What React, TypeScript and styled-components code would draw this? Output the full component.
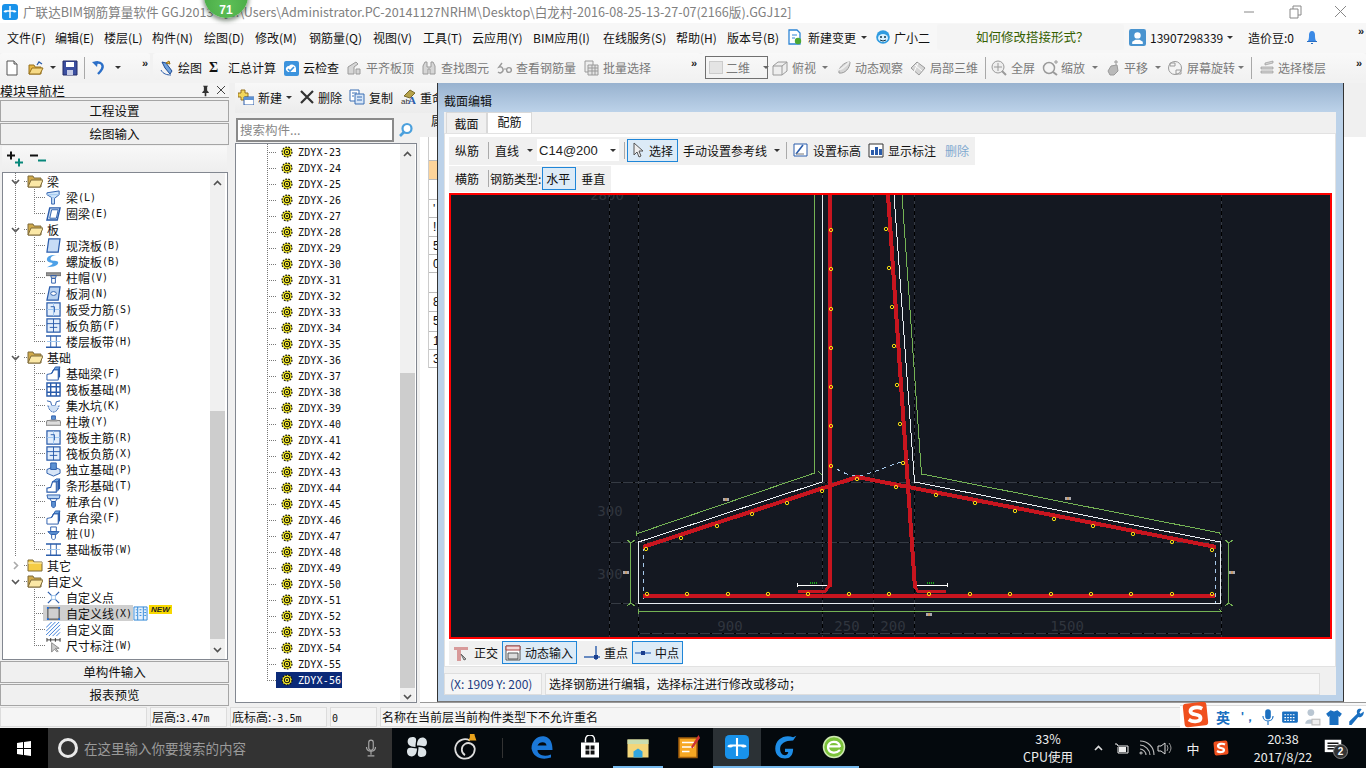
import React from "react";
import styled, { createGlobalStyle } from "styled-components";

const Global = createGlobalStyle`
  html, body { margin: 0; padding: 0; background: #f0f0f0; overflow: hidden; }
  body { font-family: "Noto Sans CJK SC", "Liberation Sans", sans-serif; font-size: 12px; color: #111; }
  * { box-sizing: border-box; }
`;

const B = "#2a5cab", L = "#9cc4ee", G = "#9a9a9a", GL = "#d6d6d6";

const icons: Record<string, React.ReactNode> = {
  newdoc: <><path d="M3 1h7l3 3v11H3z" fill="#fff" stroke="#555" /><path d="M10 1v3h3" fill="#ddd" stroke="#555" /></>,
  open: <><path d="M1 5h5l1 2h6v7H1z" fill="#e8b948" stroke="#96701c" /><path d="M1 14l3-6h11l-3 6z" fill="#f6da86" stroke="#96701c" /><path d="M9 5l2-3 3 2" fill="none" stroke="#2a5cab" strokeWidth="1.3" /></>,
  save: <><path d="M1 1h14v14H1z" fill="#3b4fa0" stroke="#222a66" /><path d="M4 2h8v5H4z" fill="#fff" /><path d="M5 10h6v5H5z" fill="#c6cce6" /></>,
  undo: <><path d="M4 3c6-2 9 2 7 6-1 2-3 4-4 5" fill="none" stroke="#2b6fc8" strokeWidth="2.4" /><path d="M1 2l6-1-1 6z" fill="#2b6fc8" /></>,
  draw: <><path d="M3 2l4 1 6 8-2 3-5-6z" fill="#6ea1dc" stroke="#1f4b94" /><path d="M7 3l3-2 1 3z" fill="#e8c24a" stroke="#96701c" /><path d="M2 10c2 4 6 5 10 5" fill="none" stroke="#2a5cab" /></>,
  cloud: <><rect x="1" y="1" width="15" height="15" rx="2" fill="#3c93dd" /><path d="M3 10a3 3 0 0 1 3-4 4 4 0 0 1 7 2v4H5z" fill="#fff" /><path d="M5 9l2 2 4-4" fill="none" stroke="#3c93dd" strokeWidth="1.6" /></>,
  align: <><path d="M2 14V7l8-5 2 2-4 3v7z" fill={GL} stroke={G} /><path d="M10 9h4v5h-4z" fill={GL} stroke={G} /></>,
  binoc: <><path d="M2 6l2-4h2v5h4V2h2l2 4v8H9V9H7v5H2z" fill={GL} stroke={G} /></>,
  eye60: <><path d="M2 12a3 3 0 1 0 1-5l3-4" fill="none" stroke={G} strokeWidth="1.4" /><path d="M8 9h2" stroke={G} /><circle cx="13" cy="10" r="2.4" fill="none" stroke={G} strokeWidth="1.4" /></>,
  batch: <><path d="M2 1h8v11H2z" fill="#eee" stroke={G} /><path d="M5 5h10v10H5z" fill="#e4e4e4" stroke={G} /><path d="M5 8h10M5 11h10M9 5v10M12 5v10" stroke={G} /></>,
  cube: <><path d="M1 6l5-4h9v9l-5 4H1z" fill="#eee" stroke={G} /><path d="M1 6h9v9M10 6l5-4" fill="none" stroke={G} /></>,
  orbit: <><path d="M3 13C2 8 8 2 14 2c0 6-5 12-11 11z" fill={GL} stroke={G} /><path d="M1 10c4 0 8-3 12-8" fill="none" stroke="#eee" strokeWidth="2" /></>,
  local3d: <><path d="M1 8l6-6 8 6-6 7z" fill={GL} stroke={G} /><path d="M5 5l7 6M8 3l-4 9" stroke="#fff" /></>,
  full: <><circle cx="7" cy="7" r="6" fill="#eee" stroke={G} /><path d="M7 3v8M3 7h8" stroke={G} /><path d="M11 11l4 4" stroke={G} strokeWidth="2" /></>,
  zoom: <><circle cx="7" cy="8" r="5.5" fill="#f4f4f4" stroke={G} strokeWidth="1.5" /><path d="M11 12l4 3" stroke={G} strokeWidth="2" /><path d="M12 2h4M14 0v4" stroke={G} /></>,
  pan: <><path d="M3 11l3-5 6-1 1 6-4 4H5z" fill="#b9b9b9" stroke={G} /><path d="M11 0v5M9 2h4" stroke={G} /></>,
  rotate: <><circle cx="8" cy="8" r="6.5" fill="#f4f4f4" stroke={G} /><path d="M3 3h5v3H3zM9 10h5v4H9z" fill="none" stroke={G} /></>,
  floors: <><path d="M6 3l8-2v2l-8 2zM2 7h12v2H2zM2 11h12v2H2z" fill={GL} stroke={G} strokeWidth=".7" /></>,
  doc: <><path d="M2 1h8l3 3v11H2z" fill="#fff" stroke="#2e86d6" strokeWidth="1.3" /><path d="M5 6h5M5 9h3" stroke="#2e86d6" /><circle cx="11" cy="12" r="3.2" fill="#4da833" /></>,
  robot: <><circle cx="8" cy="8" r="6.8" fill="#2f9be0" /><ellipse cx="8" cy="9" rx="5" ry="4" fill="#d7f0ff" /><circle cx="6" cy="8" r="1" fill="#134" /><circle cx="10" cy="8" r="1" fill="#134" /><path d="M5 11q3 2 6 0" fill="none" stroke="#134" /></>,
  user: <><rect x="0" y="0" width="16" height="16" rx="2" fill="#4a94cf" /><circle cx="8" cy="6" r="3" fill="#fff" /><path d="M3 14v-2l3-2h4l3 2v2z" fill="#fff" /></>,
  bell: <><path d="M4 12c1-2 1-4 1-6s1-4 3-4 3 2 3 4 0 4 1 6z" fill="#3b8ae6" /><path d="M3 12h10v1H3zM7 14h2v1H7z" fill="#2a6fc4" /></>,
  newItem: <><path d="M3 1h4v3h3v4H7v3H3V8H0V4h3z" fill="#f2d65a" stroke="#96701c" /><path d="M6 8h10v8H6z" fill="#fff" stroke="#2a5cab" /><path d="M6 8h10v3H6z" fill="#5d91d2" /></>,
  del: <path d="M2 2l12 12M14 2L2 14" stroke="#333" strokeWidth="2.2" />,
  copy: <><path d="M1 1h9v11H1z" fill="#fff" stroke="#3b6fb4" /><path d="M6 5h9v10H6z" fill="#d6e5f7" stroke="#3b6fb4" /><path d="M3 4h5M3 7h2M8 8h5M8 11h5" stroke="#3b6fb4" /></>,
  rename: <><path d="M4 7l6-6 5 3-5 5z" fill="#b6a24a" stroke="#776a2a" /><text x="1" y="15" fontSize="8" fontFamily="Liberation Sans" fill="#333">ab</text><text x="8" y="15" fontSize="11" fontWeight="700" fontFamily="Liberation Serif" fill="#2a5cab">A</text></>,
  search: <><circle cx="9" cy="6.5" r="4.5" fill="#fff" stroke="#4ba0dd" strokeWidth="2.2" /><path d="M6 10l-4 4" stroke="#4ba0dd" strokeWidth="2.6" /></>,
  cursor: <path d="M4 1v12l3-3 2 5 2-1-2-5h4z" fill="#eee" stroke="#555" />,
  elev: <><path d="M2 2h13v12H2z" fill="#fff" stroke="#2a5cab" /><path d="M4 12l7-9" stroke="#2a5cab" strokeWidth="1.6" /><path d="M4 12h8" stroke="#777" /></>,
  show: <><path d="M1 2h14v13H1z" fill="#fff" stroke="#333" /><path d="M3 13V8h3v5zM7 13V5h3v8zM11 13V7h3v6z" fill="#2a5cab" /></>,
  ortho: <><path d="M1 2h14v3H8v11H4V5H1z" fill="#d89a9a" /><path d="M8 9l5 5-2 1z" fill="#bbb" stroke="#666" /></>,
  dyn: <><path d="M1 1h14v14H1z" fill="#fff" stroke="#555" /><path d="M1 1h14v4H1z" fill="#f3d9d9" stroke="#a44" /><path d="M3 8h10v6H3z" fill="#ddd" stroke="#555" /></>,
  perp: <><path d="M0 12h16" stroke="#2a5cab" strokeWidth="1.4" /><path d="M12 1v14" stroke="#2a5cab" strokeWidth="1.4" /><rect x="10" y="10" width="4" height="4" fill="#1b3f8f" /></>,
  mid: <><path d="M0 8h16" stroke="#4a7cc4" strokeWidth="1.4" /><rect x="6" y="6" width="4" height="4" fill="#1b3f8f" /></>,
  folderOpen: <><path d="M1 3h5l1 2h7v9H1z" fill="#cfa94a" stroke="#7e6a3a" /><path d="M1 14l3-7h12l-3 7z" fill="#fbe8a6" stroke="#7e6a3a" /></>,
  folderClosed: <><path d="M1 3h5l1 2h8v9H1z" fill="#f5cc45" stroke="#7e6a3a" /><path d="M1 6h14" stroke="#fff4c2" /></>,
  beam: <><path d="M1 3l13-2v4L9 9v6H6V8L1 5z" fill="#cfe5fa" stroke={B} /><path d="M1 5h13M6 8h3" stroke={L} /></>,
  ring: <><path d="M4 2h11l-3 13H1z" fill="#cfe0f5" stroke={B} strokeWidth="1.5" /><path d="M6 4h7l-2 9H4z" fill="#fff" stroke={B} /></>,
  slab: <path d="M3 1h12l-2 14H1z" fill="#c7dcf6" stroke={B} strokeWidth="1.3" />,
  spiral: <path d="M15 2C9 0 4 3 5 6c1 2 8 0 8 3s-5 5-12 5c4-2 6-3 6-4S0 9 1 5s7-5 14-3z" fill="#4ea1e8" />,
  cap: <><path d="M0 3h16v3H0z" fill="#999" stroke="#666" /><path d="M5 6h6l-1 3H6z" fill="#ccc" stroke={B} /><path d="M6 9h4v5H6z" fill="#fff" stroke={B} /></>,
  hole: <><path d="M4 1h11l-2 14H1z" fill="#b9d2f1" stroke={B} strokeWidth="1.3" /><ellipse cx="8" cy="8" rx="3" ry="2" fill="#fff" stroke={B} /></>,
  rebar: <><path d="M1 1h14v14H1z" fill="#e3eefb" stroke={B} strokeWidth="1.3" /><path d="M1 8h14M8 1v14" stroke={L} /><path d="M5 5h4v6" fill="none" stroke={B} /></>,
  neg: <><path d="M1 1h14v14H1z" fill="#e3eefb" stroke={B} strokeWidth="1.3" /><path d="M1 6h14M8 1v14" stroke={B} /><path d="M4 10h8" stroke={B} /></>,
  band: <><path d="M0 2h16M0 14h16" stroke={B} strokeWidth="1.6" /><path d="M5 2v12M11 2v12" stroke={B} /><path d="M1 8h14" stroke={L} /></>,
  fbeam: <><path d="M1 15V9l5-1 2-4h5v11z" fill="#fff" stroke={B} /><path d="M6 8l4-7h5l-2 3H8z" fill="#6ea5e0" stroke={B} /><path d="M13 4l2-3v10l-2 4z" fill="#2a5cab" /></>,
  raft: <><path d="M1 1h14v14H1z" fill="#fff" stroke={B} strokeWidth="1.5" /><path d="M5 1v14M11 1v14M1 5h14M1 11h14" stroke={B} strokeWidth="1.5" /></>,
  pit: <><path d="M1 3l4 1 1 4h4l1-4 4-1" fill="none" stroke={B} /><path d="M2 8c1 4 3 7 6 7s5-3 6-7" fill="#cfe0f5" stroke={B} strokeDasharray="2 1" /></>,
  pier: <><path d="M6 2h4v4H6z" fill="#5d91d2" stroke={B} /><path d="M1 7h14l1 5H0z" fill="#ddd" stroke="#777" /><path d="M4 6h8v2H4z" fill="#999" /></>,
  iso: <><path d="M1 8l7-3 7 3v4l-7 3-7-3z" fill="#d7e5f7" stroke={B} /><path d="M5 1h6v7H5z" fill="#5d91d2" stroke={B} /></>,
  strip: <><path d="M1 15v-4l4-1 2-6h4v11z" fill="#fff" stroke={B} strokeWidth="1.2" /><path d="M7 4l4-3h4l-3 3z" fill="#6ea5e0" stroke={B} /><path d="M12 4l3-3v10l-3 4z" fill="#2a5cab" /></>,
  pilecap: <><path d="M1 1h14l-1 4H2z" fill="#bcd6f4" stroke={B} /><path d="M4 5h8l-2 3H6z" fill="#fff" stroke={B} /><path d="M6 8h4v5l-2 2-2-2z" fill="#5d91d2" stroke={B} /></>,
  pile: <><path d="M5 1h6v5H5z" fill="#fff" stroke={B} /><path d="M2 6h12l-3 3H5z" fill="#5d91d2" stroke={B} /><path d="M6 9h4v4l-2 2-2-2z" fill="#fff" stroke={B} /></>,
  pt: <><path d="M2 2l12 12M14 2L2 14" stroke={B} strokeWidth="1.3" /><rect x="6" y="6" width="4" height="4" fill="#fff" stroke={L} /></>,
  line: <><path d="M2 2h12v12H2z" fill="none" stroke="#333" /><path d="M1 1h2v2H1zM13 1h2v2h-2zM1 13h2v2H1zM13 13h2v2h-2z" fill="#1f6fe0" /></>,
  area: <path d="M0 6l6-6M0 10L10 0M0 14L14 0M3 15L15 3M7 15l8-8M11 15l4-4" stroke="#3478d6" />,
  dim: <><path d="M1 2h14M1 0v4M15 0v4M5 0v4M10 0v4" stroke="#333" /><path d="M6 5v10l3-3 3 3 1-1-3-3h4z" fill="#ccc" stroke="#888" /></>,
  tab3: <><path d="M1 1h14v14H1z" fill="#e6f1fd" stroke="#2e86d6" /><path d="M5 1v14M11 1v14M3 4h1M3 7h1M3 10h1M7 4h2M7 7h2M7 10h2M12 4h2M12 7h2M12 10h2" stroke="#2e86d6" /></>,
  appBlue: <><rect x="0" y="0" width="16" height="16" rx="3" fill="#1992ea" /><path d="M8 2v12M3 7h10M5 7a2 2 0 0 1-3 0M11 7a2 2 0 0 0 3 0" stroke="#fff" strokeWidth="1.4" fill="none" /></>,
  pin: <path d="M5 2h6v1H10v5l2 2v1H9v4H7v-4H4v-1l2-2V3H5z" fill="#333" />,
  gear: <><circle cx="8" cy="8" r="6.6" fill="#f8ee2a" stroke="#111" strokeWidth="1.6" strokeDasharray="2.4 1.6" /><circle cx="8" cy="8" r="3.6" fill="#f8ee2a" stroke="#111" strokeWidth="1.4" /><circle cx="8" cy="8" r="1.3" fill="#111" /></>,
  winlogo: <path d="M1 3l6-1v6H1zM8 2l7-1v7H8zM1 9h6v6l-6-1zM8 9h7v7l-7-1z" fill="#fff" />,
  mic: <><rect x="6" y="1" width="4" height="9" rx="2" fill="none" stroke="#aaa" /><path d="M4 7c0 5 8 5 8 0M8 11v3M5 15h6" stroke="#aaa" fill="none" /></>,
  pinwheel: <path d="M7 8C3 8 1 6 2 3c1-2 4-2 5-1s0 3 0 6zM8 7c0-4 2-6 5-5 2 1 2 4 1 5s-3 0-6 0zM9 8c4 0 6 2 5 5-1 2-4 2-5 1s0-3 0-6zM8 9c0 4-2 6-5 5-2-1-2-4-1-5s3 0 6 0z" fill="#dde4e8" />,
  spiralWin: <><path d="M11 4a6 6 0 1 0 3 5 4 4 0 1 0-6 4" fill="none" stroke="#ddd" strokeWidth="1.1" /><path d="M9 1c1-1 3-1 3 1l1 3H8l1-2z" fill="#e9a21b" transform="translate(2 -1)" /></>,
  edge: <path d="M15 10H5c0 3 4 5 9 3v2c-6 2-12 0-13-6C1 3 6 0 10 1c4 1 5 5 5 9zM5 7h6c0-3-5-3-6 0z" fill="#1b78d8" />,
  store: <><path d="M2 5h12v10H2z" fill="#fff" /><path d="M5 5V3a3 3 0 0 1 6 0v2" fill="none" stroke="#fff" /><path d="M5 7h2.6v2.6H5zM8.4 7H11v2.6H8.4zM5 10.4h2.6V13H5zM8.4 10.4H11V13H8.4z" fill="#111" /></>,
  explorer: <><path d="M1 3h14v12H1z" fill="#f3d67a" /><path d="M1 3h14v3H1z" fill="#c9ddb0" /><path d="M5 15v-4l3-2 3 2v4z" fill="#32a6e0" /></>,
  note: <><path d="M2 2h12v13H2z" fill="#f7a823" stroke="#a45f0c" /><path d="M4 5h8M4 8h8M4 11h5" stroke="#fff" /><path d="M15 0l-5 8 1 1 5-7z" fill="#c33" /></>,
  g: <path d="M13 2C8 0 2 3 2 9c0 4 3 6 6 6s5-2 5-6H8v2h2c0 1-1 2-2 2-2 0-3-2-3-4 0-3 3-5 8-5l2-3z" fill="#1e8de6" />,
  ie: <><circle cx="8" cy="8" r="7" fill="#7cc33a" stroke="#cfe9b2" /><path d="M4 7.5h8M4 8c0 4 5 5 8 2M4 8c0-4 7-5 8 0" fill="none" stroke="#fff" strokeWidth="1.5" /></>,
  wifi: <path d="M2 14a1 1 0 1 1 .1 0M1 9c3 0 6 3 6 6M1 5c5 0 10 5 10 10M1 1c8 0 14 6 14 14" fill="none" stroke="#bbb" strokeWidth="1.1" />,
  batt: <><path d="M1 4h2l1 2h10v7H4V7" fill="none" stroke="#eee" /><path d="M5 7h7v5H5z" fill="#eee" /></>,
  vol: <><path d="M1 6h3l4-3v11l-4-3H1z" fill="none" stroke="#ddd" /><path d="M10 5q2 3 0 6M12 3q4 5 0 10" fill="none" stroke="#999" /></>,
  sogou: <><rect x="1" y="1" width="14" height="14" rx="2" fill="#f0501e" transform="rotate(-6 8 8)" /><path d="M12 4.5C9 3 5 4 5 6c0 3 6 1 6 4 0 2-4 3-7 1" fill="none" stroke="#fff" strokeWidth="2.2" /></>,
  imic: <><rect x="5.5" y="1" width="5" height="9" rx="2.5" fill="#1a6fc0" /><path d="M3.5 7c0 6 9 6 9 0M8 12v3" stroke="#1a6fc0" fill="none" /></>,
  kbd: <><rect x="1" y="3" width="14" height="10" rx="1" fill="#1a6fc0" /><path d="M3 6h10M3 8.5h10M3 11h10" stroke="#fff" strokeDasharray="1.5 1" /></>,
  person: <><circle cx="7" cy="4" r="3" fill="#b9c6d2" /><path d="M2 14c0-5 9-5 9 0z" fill="#b9c6d2" /><rect x="8" y="10" width="7" height="5" fill="#eee" stroke="#bbb" /></>,
  shirt: <path d="M5 2l3 1 3-1 4 3-2 3-1-1v8H4V7L3 8 1 5z" fill="#1a6fc0" />,
  wrench: <path d="M15 3l-3 2-1-1 2-3c-3-1-5 1-4 4L2 12v3h2l6-7c3 1 5-2 5-5z" fill="#1a6fc0" />,
  msg: <><path d="M2 2h12v9H2z" fill="#fff" /><path d="M4 4.5h8M4 6.5h8M4 8.5h8" stroke="#111" /></>,
};

const Svg = styled.svg<{ $s: number }>`
  width: ${p => p.$s}px;
  height: ${p => p.$s}px;
  flex: none;
  display: block;
`;
const Ic = ({ n, s = 16 }: { n: string; s?: number }) => (
  <Svg viewBox="0 0 16 16" $s={s}>{icons[n]}</Svg>
);

const Page = styled.div`
  width: 1366px;
  height: 768px;
  display: flex;
  flex-direction: column;
  overflow: hidden;
  position: relative;
`;
const Gap = styled.i<{ $w: number }>`
  width: ${p => p.$w}px;
  flex: none;
  display: block;
`;

/* title bar */
const TitleBar = styled.div`
  height: 23px;
  background: #fff;
  display: flex;
  align-items: center;
  padding-left: 2px;
  gap: 5px;
  color: #808080;
  font-size: 12.6px;
  white-space: nowrap;
`;
const TitleText = styled.span`
  flex: 1;
  overflow: hidden;
`;
const WinBtns = styled.div`
  display: flex;
  gap: 30px;
  padding-right: 17px;
`;
const Badge = styled.div`
  position: absolute;
  left: 204px;
  top: -26px;
  width: 44px;
  height: 44px;
  border-radius: 50%;
  background: radial-gradient(circle at 50% 70%, #5fc158, #3d9f3e);
  box-shadow: 0 2px 4px 1px rgba(40, 60, 40, 0.55);
  color: #fff;
  font: 700 12px "Liberation Sans", sans-serif;
  text-align: center;
  padding-top: 29px;
`;

/* menu */
const MenuBar = styled.div`
  height: 30px;
  background: #f7f7f7;
  display: flex;
  align-items: center;
  padding: 0 0 2px 7px;
  white-space: nowrap;
`;
const MenuItem = styled.span<{ $w: number }>`
  width: ${p => p.$w}px;
  flex: none;
  font-size: 12px;
`;
const IconLabel = styled.div<{ $w: number; $gap?: number }>`
  width: ${p => p.$w}px;
  flex: none;
  display: flex;
  align-items: center;
  gap: ${p => p.$gap ?? 5}px;
`;
const Hint = styled.div`
  width: 187px;
  height: 26px;
  margin-right: 5px;
  background: #f4f4f4;
  border-radius: 3px;
  flex: none;
  color: #356000;
  font-size: 12.5px;
  padding-left: 39px;
  line-height: 26px;
`;
const Drop = styled.i<{ $c?: string }>`
  width: 0;
  height: 0;
  flex: none;
  display: block;
  border-left: 3px solid transparent;
  border-right: 3px solid transparent;
  border-top: 3px solid ${p => p.$c ?? "#333"};
`;
const More = styled.span<{ $mr?: number }>`
  flex: none;
  font: 700 11px "Liberation Sans", sans-serif;
  color: #222;
  align-self: flex-start;
  margin-top: 2px;
  margin-right: ${p => p.$mr ?? 0}px;
`;

/* toolbar */
const ToolBar = styled.div`
  height: 30px;
  background: #f2f2f2;
  display: flex;
  align-items: flex-start;
  white-space: nowrap;
`;
const ToolGroup = styled.div<{ $w: number; $pl: number; $gap: number; $ml?: number }>`
  width: ${p => p.$w}px;
  height: 27px;
  margin-left: ${p => p.$ml ?? 0}px;
  flex: none;
  display: flex;
  align-items: center;
  padding: 2px 0 0 ${p => p.$pl}px;
  gap: ${p => p.$gap}px;
  background: linear-gradient(#f9f9f9, #f1f1f1);
  border-radius: 3px;
`;
const Tool = styled.div<{ $dim?: boolean; $gap?: number; $ml?: number }>`
  display: flex;
  align-items: center;
  gap: ${p => p.$gap ?? 3}px;
  margin-left: ${p => p.$ml ?? 0}px;
  flex: none;
  color: ${p => (p.$dim ? "#7a7a7a" : "#111")};
  font-size: 12px;
`;
const Sep = styled.i`
  width: 1px;
  height: 22px;
  background: #a8a8a8;
  flex: none;
  display: block;
`;
const Combo2D = styled.div`
  width: 63px;
  height: 23px;
  border: 1px solid #707070;
  flex: none;
  display: flex;
  align-items: center;
  padding-left: 3px;
  gap: 3px;
  color: #7a7a7a;
`;
const Swatch = styled.i`
  width: 14px;
  height: 13px;
  background: #e4e4e4;
  border: 1px solid #ccc;
  flex: none;
`;
const Sigma = styled.b`
  font: 700 14px "Liberation Serif", serif;
  width: 12px;
`;

/* main */
const Main = styled.div`
  height: 624px;
  display: flex;
  position: relative;
  background: #f0f0f0;
`;
const LeftPanel = styled.div`
  width: 229px;
  flex: none;
  display: flex;
  flex-direction: column;
  padding-bottom: 1px;
`;
const PanelHead = styled.div`
  height: 15px;
  display: flex;
  align-items: center;
  border-bottom: 1px solid #999;
  font-size: 13px;
  line-height: 15px;
  margin-bottom: 2px;
  padding-right: 3px;
  overflow: hidden;
  background: #f4f4f4;
`;
const PanelTitle = styled.span`
  flex: 1;
`;
const NavBtn = styled.div<{ $mt?: number; $mb?: number }>`
  height: 22px;
  margin-top: ${p => p.$mt ?? 0}px;
  margin-bottom: ${p => p.$mb ?? 1}px;
  border: 1px solid #a5a5a5;
  background: #f0f0f0;
  text-align: center;
  line-height: 20px;
  font-size: 12.5px;
`;
const MiniBar = styled.div`
  height: 26px;
  margin: 0 2px;
  display: flex;
  align-items: center;
  gap: 7px;
  padding-left: 5px;
  background: linear-gradient(#f8f8f8, #eee);
`;
const TreeBox = styled.div<{ $m: string }>`
  flex: 1;
  margin: ${p => p.$m};
  border: 1px solid #828790;
  background: #fff;
  display: flex;
  overflow: hidden;
  min-height: 0;
`;
const TreeList = styled.div`
  flex: 1;
  min-width: 0;
  overflow: hidden;
`;
const Bar = styled.div<{ $mr: number }>`
  width: 15px;
  flex: none;
  margin-right: ${p => p.$mr}px;
  background: #f0f0f0;
  display: flex;
  flex-direction: column;
`;
const BarEnd = styled.div<{ $h: number }>`
  height: ${p => p.$h}px;
  flex: none;
  display: flex;
  align-items: center;
  justify-content: center;
`;
const Space = styled.div<{ $h: number }>`
  height: ${p => p.$h}px;
  flex: none;
`;
const Grow = styled.div`
  flex: 1;
`;
const Thumb = styled.div<{ $h: number }>`
  height: ${p => p.$h}px;
  flex: none;
  background: #cdcdcd;
`;
const Chev = ({ d, c = "#505050" }: { d: "u" | "d" | "r"; c?: string }) => (
  <svg width="9" height="9" viewBox="0 0 9 9">
    <path
      d={d === "u" ? "M1 6l3.5-3.5L8 6" : d === "d" ? "M1 3l3.5 3.5L8 3" : "M3 1l3.5 3.5L3 8"}
      fill="none"
      stroke={c}
      strokeWidth="1.6"
    />
  </svg>
);

const dotV = (x: number, half = false) =>
  `repeating-linear-gradient(to bottom,#777 0 1px,transparent 1px 2px) ${x}px 0/1px ${half ? "8px" : "100%"} no-repeat`;
const dotH = (x: number, w: number) =>
  `repeating-linear-gradient(to right,#777 0 1px,transparent 1px 2px) ${x}px 8px/${w}px 1px no-repeat`;

const Row = styled.div<{ $pl: number; $bg: string }>`
  height: 16px;
  display: flex;
  align-items: center;
  padding-left: ${p => p.$pl}px;
  background: ${p => p.$bg};
  white-space: nowrap;
`;
const ChevCell = styled.span`
  width: 16px;
  flex: none;
  display: flex;
`;
const GroupIcon = styled.span`
  margin-right: 4px;
  flex: none;
`;
const ChildLabel = styled.span<{ $sel?: boolean }>`
  display: flex;
  align-items: center;
  height: 16px;
  margin-left: ${p => (p.$sel ? -3 : 0)}px;
  padding-left: ${p => (p.$sel ? 3 : 0)}px;
  padding-right: 1px;
  background: ${p => (p.$sel ? "#cfcfcf" : "transparent")};
  gap: 5px;
`;
const KeyText = styled.span`
  display: flex;
  align-items: center;
  font-size: 12px;
`;
const Key = styled.span`
  font: 10px "DejaVu Sans Mono", monospace;
`;
const NewTag = styled.span`
  font: italic 700 8px/9px "Liberation Sans", sans-serif;
  background: #f8d800;
  color: #222;
  padding: 0 2px;
  align-self: flex-start;
  margin-left: 1px;
`;

type T = { g?: boolean; t: string; k?: string; i?: string; open?: boolean; cont?: boolean; last?: boolean; sel?: boolean };
const tree: T[] = [
  { g: true, t: "梁", open: true, cont: true },
  { t: "梁", k: "(L)", i: "beam", cont: true },
  { t: "圈梁", k: "(E)", i: "ring", cont: true, last: true },
  { g: true, t: "板", open: true, cont: true },
  { t: "现浇板", k: "(B)", i: "slab", cont: true },
  { t: "螺旋板", k: "(B)", i: "spiral", cont: true },
  { t: "柱帽", k: "(V)", i: "cap", cont: true },
  { t: "板洞", k: "(N)", i: "hole", cont: true },
  { t: "板受力筋", k: "(S)", i: "rebar", cont: true },
  { t: "板负筋", k: "(F)", i: "neg", cont: true },
  { t: "楼层板带", k: "(H)", i: "band", cont: true, last: true },
  { g: true, t: "基础", open: true, cont: true },
  { t: "基础梁", k: "(F)", i: "fbeam", cont: true },
  { t: "筏板基础", k: "(M)", i: "raft", cont: true },
  { t: "集水坑", k: "(K)", i: "pit", cont: true },
  { t: "柱墩", k: "(Y)", i: "pier", cont: true },
  { t: "筏板主筋", k: "(R)", i: "rebar", cont: true },
  { t: "筏板负筋", k: "(X)", i: "neg", cont: true },
  { t: "独立基础", k: "(P)", i: "iso", cont: true },
  { t: "条形基础", k: "(T)", i: "strip", cont: true },
  { t: "桩承台", k: "(V)", i: "pilecap", cont: true },
  { t: "承台梁", k: "(F)", i: "fbeam", cont: true },
  { t: "桩", k: "(U)", i: "pile", cont: true },
  { t: "基础板带", k: "(W)", i: "band", cont: true, last: true },
  { g: true, t: "其它" },
  { g: true, t: "自定义", open: true },
  { t: "自定义点", i: "pt" },
  { t: "自定义线", k: "(X)", i: "line", sel: true },
  { t: "自定义面", i: "area" },
  { t: "尺寸标注", k: "(W)", i: "dim", last: true },
];

const TreeRow = ({ r }: { r: T }) => {
  if (r.g) {
    const bg = [dotH(21, 5), r.cont ? dotV(12) : ""].filter(Boolean).join(",");
    return (
      <Row $pl={8} $bg={bg}>
        <ChevCell><Chev d={r.open ? "d" : "r"} c={r.open ? "#555" : "#aaa"} /></ChevCell>
        <GroupIcon><Ic n={r.open ? "folderOpen" : "folderClosed"} /></GroupIcon>
        {r.t}
      </Row>
    );
  }
  const bg = [dotH(31, 12), dotV(31, r.last), r.cont ? dotV(12) : ""].filter(Boolean).join(",");
  return (
    <Row $pl={43} $bg={bg}>
      <ChildLabel $sel={r.sel}>
        <Ic n={r.i!} s={15} />
        <KeyText>
          {r.t}
          {r.k && <Key>{r.k}</Key>}
        </KeyText>
      </ChildLabel>
      {r.sel && <><Ic n="tab3" s={15} /><NewTag>NEW</NewTag></>}
    </Row>
  );
};

/* middle */
const MidPanel = styled.div`
  width: 182px;
  margin-left: 6px;
  flex: none;
  display: flex;
  flex-direction: column;
`;
const MidBar = styled.div`
  height: 30px;
  width: 202px;
  position: relative;
  z-index: 1;
  display: flex;
  align-items: center;
  gap: 7px;
  padding: 0 0 2px 3px;
  background: linear-gradient(#f8f8f8, #ececec);
  white-space: nowrap;
  overflow: hidden;
  flex: none;
`;
const SearchRow = styled.div`
  height: 29px;
  display: flex;
  align-items: center;
  padding-top: 4px;
  flex: none;
`;
const SearchBox = styled.div`
  width: 158px;
  height: 24px;
  margin-left: 1px;
  border: 2px solid #8a8a8a;
  background: #fff;
  color: #888;
  font-size: 12.5px;
  padding-left: 2px;
  line-height: 20px;
`;
const SearchBtn = styled.div`
  flex: 1;
  display: flex;
  justify-content: center;
`;
const ListRow = styled.div<{ $bg: string }>`
  height: 16px;
  padding-left: 40px;
  display: flex;
  background: ${p => p.$bg};
`;
const ListItem = styled.div<{ $sel?: boolean }>`
  display: flex;
  align-items: center;
  gap: 5px;
  padding: 0 1px;
  background: ${p => (p.$sel ? "#0b2a78" : "transparent")};
  color: ${p => (p.$sel ? "#fff" : "#111")};
  font: 10px "DejaVu Sans Mono", monospace;
  letter-spacing: 0.16px;
`;
const GearCell = styled.span`
  width: 16px;
  display: flex;
  justify-content: flex-end;
  flex: none;
`;

/* back panel */
const BackPanel = styled.div`
  flex: 1;
  margin-left: 3px;
  background: #fff;
  display: flex;
  flex-direction: column;
  overflow: hidden;
`;
const BackHead = styled.div`
  height: 54px;
  background: #f0f0f0;
  padding: 29px 0 0 11px;
  line-height: 18px;
  flex: none;
`;
const BackCells = styled.div`
  margin-left: 8px;
  width: 9px;
  border-left: 1px solid #ccc;
  flex: none;
`;
const BackCell = styled.div<{ $on?: boolean; $h: number }>`
  height: ${p => p.$h}px;
  border-bottom: 1px solid #bbb;
  background: ${p => (p.$on ? "#fdd49a" : "#fff")};
  font: 12px/18px "Liberation Sans", sans-serif;
  padding-left: 4px;
  overflow: hidden;
`;
const BackFoot = styled.div`
  margin-top: auto;
  height: 5px;
  flex: none;
  border-top: 1px solid #999;
  background: #f8f8f8;
`;

/* dialog */
const Dialog = styled.div`
  position: absolute;
  z-index: 2;
  left: 437px;
  top: 0;
  width: 907px;
  height: 619px;
  border: 1px solid #333;
  border-top: none;
  border-bottom-color: #777;
  background: #bcd2e9;
  padding: 0 7px 6px 6px;
  display: flex;
  flex-direction: column;
`;
const DlgTitle = styled.div`
  height: 29px;
  margin: 0 -7px 0 -6px;
  padding: 5px 0 0 6px;
  background: linear-gradient(#98b2cf, #bcd2e9);
  font-size: 12px;
  line-height: 26px;
  color: #111;
  flex: none;
`;
const Client = styled.div`
  flex: 1;
  background: #f0f0f0;
  display: flex;
  flex-direction: column;
  min-height: 0;
`;
const Tabs = styled.div`
  height: 21px;
  display: flex;
  padding-left: 2px;
  flex: none;
`;
const TabBtn = styled.div<{ $on?: boolean }>`
  width: ${p => (p.$on ? 45 : 41)}px;
  text-align: center;
  background: ${p => (p.$on ? "#fff" : "#f0f0f0")};
  border: 1px solid #d9d9d9;
  border-bottom: none;
  line-height: ${p => (p.$on ? 17 : 21)}px;
`;
const TabPage = styled.div`
  height: 534px;
  flex: none;
  background: #fff;
  border: 1px solid #e2e2e2;
  padding: 3px 3px 0 4px;
  display: flex;
  flex-direction: column;
`;
const Opts = styled.div<{ $h: number; $w: number; $mb: number }>`
  height: ${p => p.$h}px;
  width: ${p => p.$w}px;
  margin-bottom: ${p => p.$mb}px;
  flex: none;
  background: #f0f0f0;
  display: flex;
  align-items: center;
  white-space: nowrap;
  padding: 0 0 2px 6px;
`;
const OptTxt = styled.span<{ $ml?: number; $c?: string }>`
  margin-left: ${p => p.$ml ?? 0}px;
  color: ${p => p.$c ?? "#111"};
  flex: none;
`;
const OptSep = styled.i<{ $ml: number }>`
  width: 1px;
  height: 17px;
  background: #aaa;
  margin-left: ${p => p.$ml}px;
  flex: none;
`;
const ComboField = styled.div`
  width: 82px;
  height: 22px;
  background: #fff;
  margin-left: 4px;
  flex: none;
  display: flex;
  align-items: center;
  justify-content: space-between;
  padding: 0 3px 0 2px;
  font: 13px "Liberation Sans", sans-serif;
  color: #222;
`;
const ActiveBtn = styled.div<{ $w: number; $h: number; $ml: number }>`
  width: ${p => p.$w}px;
  height: ${p => p.$h}px;
  margin-left: ${p => p.$ml}px;
  flex: none;
  background: #dcebf7;
  border: 1px solid #1f86d8;
  display: flex;
  align-items: center;
  justify-content: flex-start;
  gap: 3px;
  padding-left: 2px;
`;
const Canvas = styled.div`
  width: 883px;
  height: 446px;
  border: 2px solid #f00;
  background: #141821;
  flex: none;
  overflow: hidden;
`;
const DrawSvg = styled.svg`
  display: block;
`;
const BottomOpts = styled.div`
  width: 233px;
  height: 24px;
  margin-top: 2px;
  background: #f0f0f0;
  display: flex;
  align-items: center;
  padding: 0 0 1px 4px;
  flex: none;
  white-space: nowrap;
`;
const StatusRow = styled.div`
  height: 22px;
  margin-top: 6px;
  display: flex;
  gap: 3px;
  flex: none;
`;
const StatusCell = styled.div<{ $w?: number; $c?: string; $ml?: number }>`
  ${p => (p.$w ? `width:${p.$w}px;flex:none;` : "flex:1;")}
  border: 1px solid #dedede;
  background: #f6f6f6;
  line-height: 20px;
  padding-left: ${p => p.$ml ?? 3}px;
  color: ${p => p.$c ?? "#111"};
`;
const Grip = styled.div`
  width: 13px;
  flex: none;
`;

/* status */
const StatusBar = styled.div`
  height: 21px;
  background: #f0f0f0;
  display: flex;
  gap: 3px;
  flex: none;
  padding-bottom: 1px;
  white-space: nowrap;
`;
const StatCell = styled.div<{ $w?: number }>`
  ${p => (p.$w ? `width:${p.$w}px;flex:none;` : "flex:1;")}
  border: 1px solid #dcdcdc;
  background: #f5f5f5;
  line-height: 18px;
  padding-left: 1px;
  font-size: 12px;
`;
const Sogou = styled.div`
  position: absolute;
  left: 1180px;
  top: 705px;
  width: 186px;
  height: 23px;
  background: #fff;
  border-top: 1px solid #ddd;
  display: flex;
  align-items: center;
  gap: 4px;
`;
const SogouLogo = styled.div`
  margin-top: -5px;
  margin-left: 2px;
  margin-right: 3px;
`;
const SogouEn = styled.b`
  color: #1a6fc0;
  font-size: 14px;
  width: 21px;
`;
const SogouPunct = styled.b`
  color: #1a6fc0;
  font: 700 12px "Liberation Sans", sans-serif;
  width: 14px;
  text-align: center;
`;

/* taskbar */
const Taskbar = styled.div`
  height: 40px;
  background: #04090d;
  flex: none;
  display: flex;
  align-items: center;
  color: #eee;
  white-space: nowrap;
`;
const StartBtn = styled.div`
  width: 48px;
  height: 40px;
  background: #000;
  display: flex;
  align-items: center;
  justify-content: center;
  flex: none;
`;
const SearchBar = styled.div`
  width: 344px;
  height: 40px;
  background: #333;
  flex: none;
  display: flex;
  align-items: center;
  padding: 0 12px 0 10px;
  color: #9a9a9a;
  font-size: 13.5px;
`;
const Cortana = styled.i`
  width: 20px;
  height: 20px;
  border-radius: 50%;
  border: 3px solid #e8e8e8;
  margin-right: 6px;
  flex: none;
`;
const SearchLabel = styled.span`
  flex: 1;
`;
const TaskItem = styled.div<{ $w: number; $on?: boolean; $open?: boolean }>`
  width: ${p => p.$w}px;
  height: 40px;
  flex: none;
  display: flex;
  align-items: center;
  justify-content: center;
  background: ${p => (p.$on ? "#2b3135" : "transparent")};
  border-bottom: 2px solid ${p => (p.$open ? "#76b9ed" : "transparent")};
`;
const TaskSep = styled.i`
  width: 1px;
  height: 20px;
  background: #333;
  flex: none;
  margin: 0 14px;
`;
const Stack = styled.div<{ $w: number; $ml: number }>`
  width: ${p => p.$w}px;
  margin-left: ${p => p.$ml}px;
  flex: none;
  text-align: center;
  font-size: 12.5px;
  line-height: 18px;
`;
const Tray = styled.div<{ $w: number; $ml?: number }>`
  width: ${p => p.$w}px;
  margin-left: ${p => p.$ml ?? 0}px;
  flex: none;
  display: flex;
  justify-content: center;
  font-size: 13px;
  align-items: center;
`;
const NotifyBtn = styled.div`
  width: 32px;
  flex: none;
  margin-left: -2px;
  display: flex;
  justify-content: center;
  position: relative;
`;
const NotifyNum = styled.span`
  position: absolute;
  right: 1px;
  top: 7px;
  width: 15px;
  height: 15px;
  border-radius: 50%;
  background: #333;
  border: 1px solid #888;
  color: #fff;
  font: 700 10px/13px "Liberation Sans", sans-serif;
  text-align: center;
`;

/* drawing */
const Drawing = () => {
  const red = "#c8151f", grn = "#74b254", wht = "#e9eef2", dsh = "#a6c8ea";
  const vs = [609, 638, 822, 873, 914, 1221];
  const hs: [number, number, number][] = [[609, 1221, 482], [609, 1221, 542], [609, 1221, 603], [638, 1221, 633]];
  const wallL = [230, 269, 309, 348, 387, 426, 466];
  const dots: [number, number][] = [
    ...wallL.map(y => [831, y] as [number, number]),
    [886, 229], [889, 268], [892, 307], [894, 346], [897, 385], [900, 424], [903, 463],
    [646, 549], [681, 538], [717, 526], [752, 514], [787, 503], [822, 491], [857, 479],
    [896, 487], [936, 495], [975, 503], [1015, 511], [1054, 519], [1093, 526], [1133, 534], [1172, 542], [1212, 550],
    ...[647, 687, 728, 768, 808, 849, 889, 929, 970, 1010, 1051, 1091, 1131, 1172, 1212].map(x => [x, 594] as [number, number]),
  ];
  const tags: [number, number][] = [[723, 498], [623, 571], [926, 613], [1065, 497], [1229, 571]];
  const labels: [string, number, number][] = [
    ["2800", 607, 200], ["300", 610, 516], ["300", 610, 579], ["900", 730, 631], ["250", 847, 631], ["200", 893, 631], ["1500", 1067, 631],
  ];
  return (
    <DrawSvg width="879" height="442" viewBox="451 195 879 442">
      {labels.map(([t, x, y]) => (
        <text key={t + x + y} x={x} y={y} textAnchor="middle" fontSize="14" fontFamily="DejaVu Sans Mono, monospace" fill="#30353e">{t}</text>
      ))}
      <g shapeRendering="crispEdges">
        {vs.map(x => <g key={x}><path d={`M${x + 0.5} 190V640`} stroke="#363b44" /><path d={`M${x + 0.5} 190V640`} stroke="#000" strokeDasharray="4 3" /></g>)}
        {hs.map(([a, b, y]) => <g key={y}><path d={`M${a} ${y + 0.5}H${b}`} stroke="#363b44" /><path d={`M${a} ${y + 0.5}H${b}`} stroke="#000" strokeDasharray="2 10" /></g>)}
        <path d="M830 465c10 6 18 11 27 11s30-10 53-17M643 547V603M1215 545V603" fill="none" stroke={dsh} strokeDasharray="4 4" />
        <path d="M822 195V482L638.5 542V603.5H1220.5V542L914.5 482L894 195" fill="none" stroke={wht} />
        <path d="M814.5 195V473L636 534M902 195L921.5 474L1220 533M630.5 542V603M1228.5 542V603M638 611.5H1221" fill="none" stroke={grn} />
        <path d="M627 540l4 3 4-3M627 606l4-3 4 3M1225 540l4 3 4-3M1225 606l4-3 4 3M636 531v5M818 471l4 4M1218 532l3 3M638 609v5M1219 609l3 3" fill="none" stroke={grn} />
        <path d="M797 585H830M915 585H947M797 583v4M947 583v4" fill="none" stroke="#fff" />
        <path d="M810 583h7M927 583h7" stroke="#1aa51a" strokeWidth="2" strokeDasharray="1 1" />
        <path d="M643 596H1215M643 547L857 477L1216 547" fill="none" stroke={red} strokeWidth="4" />
        <path d="M829.5 195V587M888 195L915 588" fill="none" stroke={red} strokeWidth="4" />
        <path d="M829 586L825 591.5H798M915 587L918 591.5H946" fill="none" stroke={red} strokeWidth="3" />
        {tags.map(([x, y]) => <g key={x}><rect x={x} y={y} width="6" height="3" fill="#a9a9b0" /><rect x={x + 2} y={y} width="2" height="3" fill="#c79a6a" /></g>)}
      </g>
      {dots.map(([x, y]) => <circle key={x + "-" + y} cx={x} cy={y} r="1.7" fill="none" stroke="#f7df10" strokeWidth="1" />)}
    </DrawSvg>
  );
};

const menu: [string, number][] = [
  ["文件(F)", 48], ["编辑(E)", 49], ["楼层(L)", 48], ["构件(N)", 52], ["绘图(D)", 51], ["修改(M)", 54], ["钢筋量(Q)", 64],
  ["视图(V)", 50], ["工具(T)", 49], ["云应用(Y)", 61], ["BIM应用(I)", 70], ["在线服务(S)", 73], ["帮助(H)", 51], ["版本号(B)", 60],
];
const backRows: [string, number][] = [
  ["", 24], ["", 19], ["", 20], ["'", 18], ["!", 19], ["5", 18], ["0", 18], ["", 20], ["8", 19], ["5", 20], ["1", 18], ["3", 18],
];
const ids = Array.from({ length: 34 }, (_, i) => 23 + i);

export default function App() {
  return (
    <Page>
      <Global />
      <TitleBar>
        <Ic n="appBlue" />
        <TitleText>广联达BIM钢筋算量软件 GGJ2013 - [C:\Users\Administrator.PC-20141127NRHM\Desktop\白龙村-2016-08-25-13-27-07(2166版).GGJ12]</TitleText>
        <WinBtns>
          <svg width="16" height="16" viewBox="0 0 16 16"><path d="M3 8h10" stroke="#888" /></svg>
          <svg width="16" height="16" viewBox="0 0 16 16"><path d="M3 5h8v9H3zM6 5V2h8v9h-3" fill="none" stroke="#888" /></svg>
          <svg width="16" height="16" viewBox="0 0 16 16"><path d="M2 2l11 11M13 2L2 13" stroke="#888" /></svg>
        </WinBtns>
      </TitleBar>
      <Badge>71</Badge>

      <MenuBar>
        {menu.map(([t, w]) => <MenuItem key={t} $w={w}>{t}</MenuItem>)}
        <IconLabel $w={88} $gap={5}><Ic n="doc" />新建变更<Drop /></IconLabel>
        <IconLabel $w={62} $gap={3}><Ic n="robot" />广小二</IconLabel>
        <Hint>如何修改搭接形式？</Hint>
        <IconLabel $w={119} $gap={4}><Ic n="user" s={17} /><span>13907298339</span><Drop /></IconLabel>
        <IconLabel $w={56} $gap={0}>造价豆:0</IconLabel>
        <IconLabel $w={54} $gap={0}><Ic n="bell" /></IconLabel>
        <More>»</More>
      </MenuBar>

      <ToolBar>
        <ToolGroup $w={150} $pl={4} $gap={0}>
          <Ic n="newdoc" />
          <Gap $w={8} />
          <Ic n="open" />
          <Gap $w={6} />
          <Drop />
          <Gap $w={6} />
          <Ic n="save" />
          <Gap $w={6} />
          <Sep />
          <Gap $w={6} />
          <Ic n="undo" />
          <Gap $w={8} />
          <Drop />
          <Gap $w={21} />
          <More>»</More>
        </ToolGroup>
        <ToolGroup $w={548} $ml={3} $pl={6} $gap={7}>
          <Tool><Ic n="draw" />绘图</Tool>
          <Tool $gap={7}><Sigma>Σ</Sigma>汇总计算</Tool>
          <Tool $gap={4}><Ic n="cloud" />云检查</Tool>
          <Tool $dim $gap={4}><Ic n="align" />平齐板顶</Tool>
          <Tool $dim $gap={4}><Ic n="binoc" />查找图元</Tool>
          <Tool $dim $gap={4}><Ic n="eye60" />查看钢筋量</Tool>
          <Tool $dim $gap={4}><Ic n="batch" />批量选择</Tool>
          <Grow />
          <More $mr={4}>»</More>
        </ToolGroup>
        <ToolGroup $w={665} $pl={4} $gap={0}>
          <Combo2D><Swatch />二维<Gap $w={7} /><Drop $c="#666" /></Combo2D>
          <Tool $dim $ml={4} $gap={4}><Ic n="cube" />俯视</Tool>
          <Gap $w={6} /><Drop $c="#777" />
          <Tool $dim $ml={8} $gap={3}><Ic n="orbit" />动态观察</Tool>
          <Tool $dim $ml={7} $gap={4}><Ic n="local3d" />局部三维</Tool>
          <Gap $w={7} /><Sep />
          <Tool $dim $ml={5} $gap={4}><Ic n="full" />全屏</Tool>
          <Tool $dim $ml={7} $gap={3}><Ic n="zoom" />缩放</Tool>
          <Gap $w={7} /><Drop $c="#777" />
          <Tool $dim $ml={7} $gap={3}><Ic n="pan" />平移</Tool>
          <Gap $w={7} /><Drop $c="#777" />
          <Tool $dim $ml={6} $gap={4}><Ic n="rotate" />屏幕旋转</Tool>
          <Gap $w={3} /><Drop $c="#777" />
          <Gap $w={7} /><Sep />
          <Tool $dim $ml={7} $gap={3}><Ic n="floors" />选择楼层</Tool>
          <Grow />
          <More $mr={4}>»</More>
        </ToolGroup>
      </ToolBar>

      <Main>
        <LeftPanel>
          <PanelHead>
            <PanelTitle>模块导航栏</PanelTitle>
            <Ic n="pin" s={13} />
            <Gap $w={4} />
            <svg width="10" height="10" viewBox="0 0 10 10"><path d="M1 1l8 8M9 1L1 9" stroke="#444" /></svg>
          </PanelHead>
          <NavBtn>工程设置</NavBtn>
          <NavBtn>绘图输入</NavBtn>
          <MiniBar>
            <svg width="16" height="16" viewBox="0 0 16 16"><path d="M0 4.5h8M4 .5v8" stroke="#111" strokeWidth="2" /><path d="M8 11.5h8M12 7.5v8" stroke="#07877a" strokeWidth="2" /></svg>
            <svg width="16" height="16" viewBox="0 0 16 16"><path d="M0 4.5h8" stroke="#111" strokeWidth="2" /><path d="M8 9.5h8" stroke="#07877a" strokeWidth="2" /></svg>
          </MiniBar>
          <TreeBox $m="0 1px 0 2px">
            <TreeList>{tree.map((r, i) => <TreeRow key={i} r={r} />)}</TreeList>
            <Bar $mr={2}>
              <BarEnd $h={20}><Chev d="u" /></BarEnd>
              <Space $h={218} />
              <Thumb $h={228} />
              <Grow />
              <BarEnd $h={19}><Chev d="d" /></BarEnd>
            </Bar>
          </TreeBox>
          <NavBtn $mt={1}>单构件输入</NavBtn>
          <NavBtn $mb={0}>报表预览</NavBtn>
        </LeftPanel>

        <MidPanel>
          <MidBar>
            <Tool $gap={4}><Ic n="newItem" />新建<Drop /></Tool>
            <Tool $gap={3}><Ic n="del" />删除</Tool>
            <Tool $gap={4}><Ic n="copy" />复制</Tool>
            <Tool $gap={4}><Ic n="rename" />重命名</Tool>
          </MidBar>
          <SearchRow>
            <SearchBox>搜索构件...</SearchBox>
            <SearchBtn><Ic n="search" /></SearchBtn>
          </SearchRow>
          <TreeBox $m="1px 0 4px 0">
            <TreeList>
              {ids.map(n => (
                <ListRow key={n} $bg={[dotH(31, 9), dotV(31, n === 56)].join(",")}>
                  <ListItem $sel={n === 56}><GearCell><Ic n="gear" s={12} /></GearCell>ZDYX-{n}</ListItem>
                </ListRow>
              ))}
            </TreeList>
            <Bar $mr={1}>
              <BarEnd $h={20}><Chev d="u" /></BarEnd>
              <Space $h={209} />
              <Thumb $h={315} />
              <Grow />
              <BarEnd $h={17}><Chev d="d" /></BarEnd>
            </Bar>
          </TreeBox>
        </MidPanel>

        <BackPanel>
          <BackHead>属性</BackHead>
          <BackCells>
            {backRows.map(([t, h], i) => <BackCell key={i} $h={h} $on={i === 1}>{t}</BackCell>)}
          </BackCells>
          <BackFoot />
        </BackPanel>

        <Dialog>
          <DlgTitle>截面编辑</DlgTitle>
          <Client>
            <Tabs>
              <TabBtn>截面</TabBtn>
              <TabBtn $on>配筋</TabBtn>
            </Tabs>
            <TabPage>
              <Opts $h={28} $w={526} $mb={1}>
                <OptTxt>纵筋</OptTxt>
                <OptSep $ml={9} />
                <OptTxt $ml={6}>直线</OptTxt>
                <Gap $w={8} /><Drop />
                <ComboField>C14@200<Drop /></ComboField>
                <OptSep $ml={5} />
                <ActiveBtn $w={51} $h={23} $ml={2}><Ic n="cursor" />选择</ActiveBtn>
                <OptTxt $ml={5}>手动设置参考线</OptTxt>
                <Gap $w={7} /><Drop />
                <OptSep $ml={6} />
                <Gap $w={5} /><Ic n="elev" />
                <OptTxt $ml={5}>设置标高</OptTxt>
                <Gap $w={7} /><Ic n="show" />
                <OptTxt $ml={4}>显示标注</OptTxt>
                <OptTxt $ml={9} $c="#7fa8cf">删除</OptTxt>
              </Opts>
              <Opts $h={26} $w={162} $mb={1}>
                <OptTxt>横筋</OptTxt>
                <OptSep $ml={9} />
                <OptTxt $ml={1}>钢筋类型:</OptTxt>
                <ActiveBtn $w={34} $h={23} $ml={1}><OptTxt $ml={1}>水平</OptTxt></ActiveBtn>
                <OptTxt $ml={5}>垂直</OptTxt>
              </Opts>
              <Canvas><Drawing /></Canvas>
              <BottomOpts>
                <Ic n="ortho" />
                <OptTxt $ml={5}>正交</OptTxt>
                <ActiveBtn $w={75} $h={23} $ml={4}><Ic n="dyn" /><OptTxt $ml={1}>动态输入</OptTxt></ActiveBtn>
                <Gap $w={7} /><Ic n="perp" />
                <OptTxt $ml={4}>重点</OptTxt>
                <ActiveBtn $w={51} $h={23} $ml={4}><Ic n="mid" /><OptTxt $ml={1}>中点</OptTxt></ActiveBtn>
              </BottomOpts>
            </TabPage>
            <StatusRow>
              <StatusCell $w={98} $c="#1c3a80" $ml={5}>(X: 1909 Y: 200)</StatusCell>
              <StatusCell>选择钢筋进行编辑，选择标注进行修改或移动；</StatusCell>
              <Grip />
            </StatusRow>
          </Client>
        </Dialog>
      </Main>

      <StatusBar>
        <StatCell $w={147} />
        <StatCell $w={77}>层高:<Key>3.47m</Key></StatCell>
        <StatCell $w={97}>底标高:<Key>-3.5m</Key></StatCell>
        <StatCell $w={47}><Key>0</Key></StatCell>
        <StatCell>名称在当前层当前构件类型下不允许重名</StatCell>
      </StatusBar>
      <Sogou>
        <SogouLogo><Ic n="sogou" s={27} /></SogouLogo>
        <SogouEn>英</SogouEn>
        <SogouPunct>'，</SogouPunct>
        <Ic n="imic" s={18} />
        <Ic n="kbd" s={18} />
        <Ic n="person" s={18} />
        <Ic n="shirt" s={18} />
        <Ic n="wrench" s={18} />
      </Sogou>

      <Taskbar>
        <StartBtn><Ic n="winlogo" s={16} /></StartBtn>
        <SearchBar>
          <Cortana />
          <SearchLabel>在这里输入你要搜索的内容</SearchLabel>
          <Ic n="mic" s={18} />
        </SearchBar>
        <TaskItem $w={50}><Ic n="pinwheel" s={24} /></TaskItem>
        <TaskItem $w={46}><Ic n="spiralWin" s={26} /></TaskItem>
        <TaskSep />
        <TaskItem $w={50}><Ic n="edge" s={24} /></TaskItem>
        <TaskItem $w={46}><Ic n="store" s={24} /></TaskItem>
        <TaskItem $w={50} $open><Ic n="explorer" s={24} /></TaskItem>
        <TaskItem $w={50}><Ic n="note" s={24} /></TaskItem>
        <TaskItem $w={48} $on $open><Ic n="appBlue" s={24} /></TaskItem>
        <TaskItem $w={48} $open><Ic n="g" s={26} /></TaskItem>
        <TaskItem $w={50} $open><Ic n="ie" s={24} /></TaskItem>
        <Stack $w={60} $ml={159}><div>33%</div><div>CPU使用</div></Stack>
        <Tray $w={20} $ml={10}><Chev d="u" c="#ddd" /></Tray>
        <Tray $w={24} $ml={2}><Ic n="batt" /></Tray>
        <Tray $w={22} $ml={2}><Ic n="wifi" /></Tray>
        <Tray $w={20} $ml={-3}><Ic n="vol" /></Tray>
        <Tray $w={36}>中</Tray>
        <Tray $w={20}><Ic n="sogou" /></Tray>
        <Stack $w={72} $ml={16}><div>20:38</div><div>2017/8/22</div></Stack>
        <NotifyBtn><Ic n="msg" s={22} /><NotifyNum>2</NotifyNum></NotifyBtn>
      </Taskbar>
    </Page>
  );
}
